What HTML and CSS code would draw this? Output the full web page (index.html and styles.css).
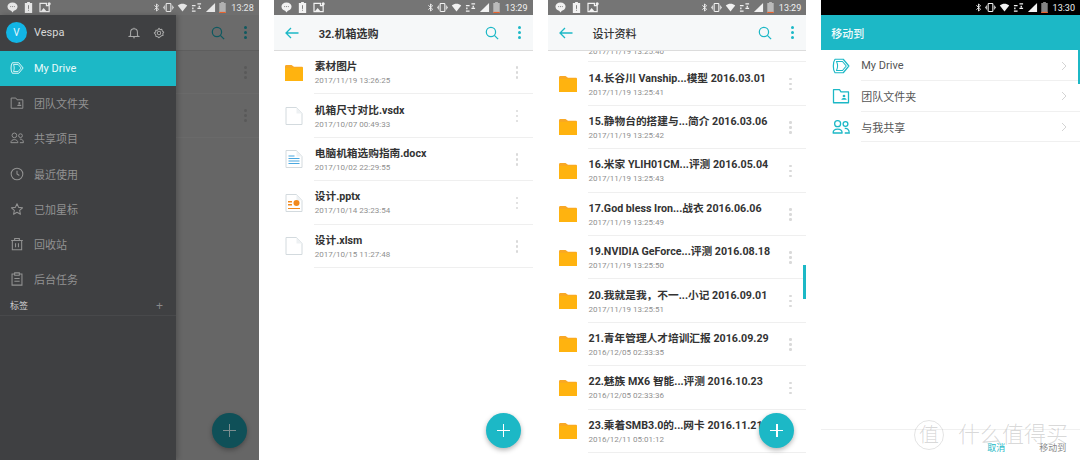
FILE: index.html
```html
<!DOCTYPE html>
<html lang="en">
<head>
  <meta charset="UTF-8">
  <title>Drive screens</title>
  <link rel="stylesheet" href="styles.css">
</head>
<body>
  <!-- shared icons -->
  <svg class="defs" width="0" height="0">
    <symbol id="i-bubble" viewBox="0 0 12 12"><path d="M6 .5c3.200 0 5.500 1.900 5.500 4.500S9.200 9.500 7.500 9.500L6 11.500 4.500 9.500C2.800 9.500.5 7.600.5 5S2.800.5 6 .5z" fill="currentColor"/><path d="M3.500 5h5" stroke="#777" stroke-dasharray="1 1" fill="none"/></symbol>
    <symbol id="i-batt" viewBox="0 0 12 12"><path d="M4.500 0h3v1H10v11H2V1h2.500z" fill="currentColor"/><path d="M6 3.500v4M6 8.500v1" stroke="#777"/></symbol>
    <symbol id="i-flag" viewBox="0 0 14 12"><path d="M1 1.500h7V4h3v6.500H1z" fill="none" stroke="currentColor" stroke-width="1.300"/><path d="M2 10l3-3.500L8 10z" fill="currentColor"/><circle cx="11" cy="2" r="1.700" fill="currentColor"/></symbol>
    <symbol id="i-bt" viewBox="0 0 10 12"><path d="M2 3l6 5.500L5 11V1l3 2.500L2 9" fill="none" stroke="currentColor" stroke-width="1.300"/></symbol>
    <symbol id="i-vib" viewBox="0 0 14 12"><rect x="4" y="1" width="6" height="10" rx="1" fill="none" stroke="currentColor" stroke-width="1.400"/><path d="M2 3.500v5M12 3.500v5M.5 5v2M13.500 5v2" stroke="currentColor"/></symbol>
    <symbol id="i-wifi" viewBox="0 0 14 12"><path d="M1 3.500C4.500.5 9.500.5 13 3.500L7 11z" fill="currentColor"/></symbol>
    <symbol id="i-data" viewBox="0 0 12 12"><path d="M1 4h4M7 2h4M1 10h4M7 7h4M2 6v2M9 4v2" stroke="currentColor" stroke-width="1.500" fill="none"/></symbol>
    <symbol id="i-signal" viewBox="0 0 10 12"><path d="M10 1v10H0z" fill="currentColor"/></symbol>
    <symbol id="i-cell" viewBox="0 0 7 12"><path d="M2 0h3v1h2v11H0V1h2z" fill="currentColor" opacity=".55"/><path d="M0 10.800h7V12H0z" fill="#e8622c"/></symbol>
    <symbol id="i-drive" viewBox="0 0 24 24"><path d="M4 3h11l7.500 9-7.500 9H4c-3-4-3-14 0-18z" fill="none" stroke="currentColor" stroke-width="1.600" stroke-linejoin="round"/><path d="M6 6h8l5 6-5 6H6c1.700-3.500 1.700-8.500 0-12z" fill="none" stroke="currentColor" stroke-width="1.400" stroke-linejoin="round"/></symbol>
    <symbol id="i-team" viewBox="0 0 24 24"><path d="M2 3.500h8l2 3h10V21H2z" fill="none" stroke="currentColor" stroke-width="1.700" stroke-linejoin="round"/><circle cx="16" cy="12" r="1.800" fill="currentColor"/><path d="M12.500 17c0-3 7-3 7 0z" fill="currentColor"/></symbol>
    <symbol id="i-people" viewBox="0 0 24 24"><circle cx="7.500" cy="7.500" r="4" fill="none" stroke="currentColor" stroke-width="1.700"/><path d="M1.500 20c0-7 12-7 12 0z" fill="none" stroke="currentColor" stroke-width="1.700" stroke-linejoin="round"/><circle cx="18" cy="8" r="3.200" fill="none" stroke="currentColor" stroke-width="1.700"/><path d="M17 14c3-.5 6 1 6 6h-6" fill="none" stroke="currentColor" stroke-width="1.700"/></symbol>
    <symbol id="i-clock" viewBox="0 0 24 24"><circle cx="12" cy="12" r="10" fill="none" stroke="currentColor" stroke-width="1.800"/><path d="M12 6.500V12l4 2.500" fill="none" stroke="currentColor" stroke-width="1.800"/></symbol>
    <symbol id="i-star" viewBox="0 0 24 24"><path d="M12 3l2.800 6.200 6.700.7-5 4.500 1.400 6.600L12 17.600 6.100 21l1.400-6.600-5-4.500 6.700-.7z" fill="none" stroke="currentColor" stroke-width="1.800" stroke-linejoin="round"/></symbol>
    <symbol id="i-trash" viewBox="0 0 24 24"><path d="M2 6h20M8 6V2.500h8V6M4 6v16h16V6M9.500 10.500v7M14.500 10.500v7" fill="none" stroke="currentColor" stroke-width="1.800"/></symbol>
    <symbol id="i-clip" viewBox="0 0 24 24"><path d="M8 3.500H3.500v19h17v-19H16M8 1.500h8v4H8zM7.500 11h9M7.500 16h9" fill="none" stroke="currentColor" stroke-width="1.800"/></symbol>
    <symbol id="i-bell" viewBox="0 0 14 14"><path d="M3 10V6a4 4 0 0 1 8 0v4l1.500 1h-11zM6 12.500h2M7 1v1" fill="none" stroke="currentColor" stroke-width="1.200"/></symbol>
    <symbol id="i-gear" viewBox="0 0 14 14"><circle cx="7" cy="7" r="2" fill="none" stroke="currentColor" stroke-width="1.200"/><path d="M7 1.500l1.300 1.600 2-.4.600 2 1.600 1.300-1.100 1.700.4 2-2 .6L7 12.500l-1.700-1.200-2-.4-.1-2L1.500 7l1.600-1.300.2-2 2 .1z" fill="none" stroke="currentColor" stroke-width="1.200" stroke-linejoin="round"/></symbol>
    <symbol id="i-search" viewBox="0 0 16 16"><circle cx="6.800" cy="6.800" r="5.300" fill="none" stroke="currentColor" stroke-width="1.400"/><path d="M10.700 10.700L15 15" stroke="currentColor" stroke-width="1.500"/></symbol>
    <symbol id="i-back" viewBox="0 0 14 12"><path d="M13.500 6H1M6 1L1 6l5 5" fill="none" stroke="currentColor" stroke-width="1.300"/></symbol>
    <symbol id="i-folder" viewBox="0 0 18 18"><path d="M0 2.500C0 1.500.5 1 1.500 1h5L9 2.700h7.500c1 0 1.500.4 1.500 1.300H0z" fill="#f9a825"/><path d="M0 3.800h18V17H0z" fill="#ffb30f"/></symbol>
    <symbol id="i-file" viewBox="0 0 18 18"><path d="M1 .5h10.500L17 6.500v11H1z" fill="#fff" stroke="#d3dade"/><path d="M11.500.5v6H17z" fill="#eef1f3"/></symbol>
    <symbol id="i-doc" viewBox="0 0 18 18"><path d="M1 .5h10.500L17 6.500v11H1z" fill="#fff" stroke="#d3dade"/><path d="M11.500.5v6H17z" fill="#eef1f3"/><path d="M3.500 8.500h11M3.500 11h11M3.500 13.500h11M3.500 6h6" stroke="#4aa8e0" stroke-width="1.100"/></symbol>
    <symbol id="i-ppt" viewBox="0 0 18 18"><path d="M1 .5h10.500L17 6.500v11H1z" fill="#fff" stroke="#d3dade"/><path d="M11.500.5v6H17z" fill="#eef1f3"/><circle cx="11.500" cy="9" r="3" fill="#f28a1e"/><path d="M3 7h4v1.500H3zM3 10h4v1.500H3z" fill="#f28a1e"/><path d="M3 14.500h12" stroke="#f28a1e"/></symbol>
    <symbol id="i-chev" viewBox="0 0 6 10"><path d="M1 1l4 4-4 4" fill="none" stroke="currentColor" stroke-width="1"/></symbol>
  </svg>

  <div class="screens">
    <!-- drawer screen -->
    <section class="phone">
      <div class="status dim">
        <div class="status-left">
          <svg class="st"><use href="#i-bubble"/></svg><svg class="st"><use href="#i-batt"/></svg><svg class="st wide"><use href="#i-flag"/></svg>
        </div>
        <div class="status-right">
          <svg class="st sm"><use href="#i-bt"/></svg><svg class="st"><use href="#i-vib"/></svg><svg class="st"><use href="#i-wifi"/></svg><svg class="st"><use href="#i-data"/></svg><svg class="st"><use href="#i-signal"/></svg><svg class="st sm"><use href="#i-cell"/></svg><span>13:28</span>
        </div>
      </div>
      <div class="drawer-wrap">
        <aside class="drawer">
          <div class="drawer-head">
            <span class="avatar">V</span>
            <span class="user">Vespa</span>
            <svg class="head-ic"><use href="#i-bell"/></svg>
            <svg class="head-ic"><use href="#i-gear"/></svg>
          </div>
          <nav class="nav">
            <div class="nav-row active"><svg class="nav-ic"><use href="#i-drive"/></svg>My Drive</div>
            <div class="nav-row"><svg class="nav-ic"><use href="#i-team"/></svg>团队文件夹</div>
            <div class="nav-row"><svg class="nav-ic"><use href="#i-people"/></svg>共享项目</div>
            <div class="nav-row"><svg class="nav-ic"><use href="#i-clock"/></svg>最近使用</div>
            <div class="nav-row"><svg class="nav-ic"><use href="#i-star"/></svg>已加星标</div>
            <div class="nav-row"><svg class="nav-ic"><use href="#i-trash"/></svg>回收站</div>
            <div class="nav-row"><svg class="nav-ic"><use href="#i-clip"/></svg>后台任务</div>
          </nav>
          <div class="tags"><span>标签</span><span class="tags-plus">+</span></div>
        </aside>
        <div class="scrim">
          <div class="scrim-bar">
            <svg class="bar-search"><use href="#i-search"/></svg>
            <span class="dots"><i></i><i></i><i></i></span>
          </div>
          <div class="scrim-row"><span class="dots"><i></i><i></i><i></i></span></div>
          <div class="scrim-row"><span class="dots"><i></i><i></i><i></i></span></div>
        </div>
      </div>
      <div class="fab fab-dim"></div>
    </section>

    <!-- folder screen -->
    <section class="phone">
      <div class="status">
        <div class="status-left">
          <svg class="st"><use href="#i-bubble"/></svg><svg class="st"><use href="#i-batt"/></svg><svg class="st wide"><use href="#i-flag"/></svg>
        </div>
        <div class="status-right">
          <svg class="st sm"><use href="#i-bt"/></svg><svg class="st"><use href="#i-vib"/></svg><svg class="st"><use href="#i-wifi"/></svg><svg class="st"><use href="#i-data"/></svg><svg class="st"><use href="#i-signal"/></svg><svg class="st sm"><use href="#i-cell"/></svg><span>13:29</span>
        </div>
      </div>
      <header class="appbar">
        <svg class="back"><use href="#i-back"/></svg>
        <span class="title">32.机箱选购</span>
        <svg class="bar-search"><use href="#i-search"/></svg>
        <span class="dots"><i></i><i></i><i></i></span>
      </header>
      <div class="list">
        <div class="row"><svg class="file-ic"><use href="#i-folder"/></svg><div class="row-text"><div class="name">素材图片</div><div class="date">2017/11/19 13:26:25</div></div><span class="dots"><i></i><i></i><i></i></span></div>
        <div class="row"><svg class="file-ic"><use href="#i-file"/></svg><div class="row-text"><div class="name">机箱尺寸对比.vsdx</div><div class="date">2017/10/07 00:49:33</div></div><span class="dots"><i></i><i></i><i></i></span></div>
        <div class="row"><svg class="file-ic"><use href="#i-doc"/></svg><div class="row-text"><div class="name">电脑机箱选购指南.docx</div><div class="date">2017/10/02 22:29:55</div></div><span class="dots"><i></i><i></i><i></i></span></div>
        <div class="row"><svg class="file-ic"><use href="#i-ppt"/></svg><div class="row-text"><div class="name">设计.pptx</div><div class="date">2017/10/14 23:23:54</div></div><span class="dots"><i></i><i></i><i></i></span></div>
        <div class="row"><svg class="file-ic"><use href="#i-file"/></svg><div class="row-text"><div class="name">设计.xlsm</div><div class="date">2017/10/15 11:27:48</div></div><span class="dots"><i></i><i></i><i></i></span></div>
      </div>
      <div class="fab"></div>
    </section>

    <!-- long list screen -->
    <section class="phone">
      <div class="status">
        <div class="status-left">
          <svg class="st"><use href="#i-bubble"/></svg><svg class="st"><use href="#i-batt"/></svg><svg class="st wide"><use href="#i-flag"/></svg>
        </div>
        <div class="status-right">
          <svg class="st sm"><use href="#i-bt"/></svg><svg class="st"><use href="#i-vib"/></svg><svg class="st"><use href="#i-wifi"/></svg><svg class="st"><use href="#i-data"/></svg><svg class="st"><use href="#i-signal"/></svg><svg class="st sm"><use href="#i-cell"/></svg><span>13:29</span>
        </div>
      </div>
      <header class="appbar">
        <svg class="back"><use href="#i-back"/></svg>
        <span class="title thin">设计资料</span>
        <svg class="bar-search"><use href="#i-search"/></svg>
        <span class="dots"><i></i><i></i><i></i></span>
      </header>
      <div class="list scrolled">
        <div class="row"><svg class="file-ic"><use href="#i-folder"/></svg><div class="row-text"><div class="date clipped">2017/11/19 13:25:40</div></div></div>
        <div class="row"><svg class="file-ic"><use href="#i-folder"/></svg><div class="row-text"><div class="name">14.长谷川 Vanship...模型 2016.03.01</div><div class="date">2017/11/19 13:25:41</div></div><span class="dots"><i></i><i></i><i></i></span></div>
        <div class="row"><svg class="file-ic"><use href="#i-folder"/></svg><div class="row-text"><div class="name">15.静物台的搭建与...简介 2016.03.06</div><div class="date">2017/11/19 13:25:42</div></div><span class="dots"><i></i><i></i><i></i></span></div>
        <div class="row"><svg class="file-ic"><use href="#i-folder"/></svg><div class="row-text"><div class="name">16.米家 YLIH01CM...评测 2016.05.04</div><div class="date">2017/11/19 13:25:43</div></div><span class="dots"><i></i><i></i><i></i></span></div>
        <div class="row"><svg class="file-ic"><use href="#i-folder"/></svg><div class="row-text"><div class="name">17.God bless Iron...战衣 2016.06.06</div><div class="date">2017/11/19 13:25:49</div></div><span class="dots"><i></i><i></i><i></i></span></div>
        <div class="row"><svg class="file-ic"><use href="#i-folder"/></svg><div class="row-text"><div class="name">19.NVIDIA GeForce...评测 2016.08.18</div><div class="date">2017/11/19 13:25:50</div></div><span class="dots"><i></i><i></i><i></i></span></div>
        <div class="row"><svg class="file-ic"><use href="#i-folder"/></svg><div class="row-text"><div class="name">20.我就是我，不一...小记 2016.09.01</div><div class="date">2017/11/19 13:25:51</div></div><span class="dots"><i></i><i></i><i></i></span></div>
        <div class="row"><svg class="file-ic"><use href="#i-folder"/></svg><div class="row-text"><div class="name">21.青年管理人才培训汇报 2016.09.29</div><div class="date">2016/12/05 02:33:35</div></div><span class="dots"><i></i><i></i><i></i></span></div>
        <div class="row"><svg class="file-ic"><use href="#i-folder"/></svg><div class="row-text"><div class="name">22.魅族 MX6 智能...评测 2016.10.23</div><div class="date">2016/12/05 02:33:36</div></div><span class="dots"><i></i><i></i><i></i></span></div>
        <div class="row"><svg class="file-ic"><use href="#i-folder"/></svg><div class="row-text"><div class="name">23.乘着SMB3.0的...网卡 2016.11.21</div><div class="date">2016/12/11 05:01:12</div></div></div>
      </div>
      <div class="scroll-thumb"></div>
      <div class="fab"></div>
    </section>

    <!-- move to screen -->
    <section class="phone">
      <div class="status black">
        <div class="status-left"></div>
        <div class="status-right">
          <svg class="st sm"><use href="#i-bt"/></svg><svg class="st"><use href="#i-vib"/></svg><svg class="st"><use href="#i-wifi"/></svg><svg class="st"><use href="#i-data"/></svg><svg class="st"><use href="#i-signal"/></svg><svg class="st sm"><use href="#i-cell"/></svg><span>13:30</span>
        </div>
      </div>
      <header class="move-bar">移动到</header>
      <div class="move-list">
        <div class="move-row"><svg class="move-ic"><use href="#i-drive"/></svg><span class="move-name">My Drive</span><svg class="chev"><use href="#i-chev"/></svg></div>
        <div class="move-row"><svg class="move-ic"><use href="#i-team"/></svg><span class="move-name">团队文件夹</span><svg class="chev"><use href="#i-chev"/></svg></div>
        <div class="move-row"><svg class="move-ic"><use href="#i-people"/></svg><span class="move-name">与我共享</span><svg class="chev"><use href="#i-chev"/></svg></div>
      </div>
      <div class="move-thumb"></div>
      <footer class="move-foot"><span class="cancel">取消</span><span class="confirm">移动到</span></footer>
      <div class="watermark"><span class="wm-badge">值</span><span>什么值得买</span></div>
    </section>
  </div>
</body>
</html>
```

FILE: styles.css
```css
* {
  box-sizing: border-box;
}
html, body {
  margin: 0;
  height: 460px;
  overflow: hidden;
  background-color: #fff;
}
body {
  font-family: Roboto, 'Noto Sans CJK SC', sans-serif;
  color: #333;
}
.defs {
  position: absolute;
}
.screens {
  display: flex;
  gap: 15px;
  height: 460px;
}
.phone {
  position: relative;
  width: 259px;
  height: 460px;
  overflow: hidden;
  display: flex;
  flex-direction: column;
  background-color: #fff;
}

/* status bar */
.status {
  flex: none;
  height: 15px;
  background-color: #757575;
  color: #f2f2f2;
  display: flex;
  justify-content: space-between;
  align-items: center;
  padding: 0 5px 0 7px;
  font-size: 9px;
}
.status.dim {
  background-color: #6f6f6f;
  color: #e6e6e6;
}
.status.black {
  background-color: #000;
}
.status-left, .status-right {
  display: flex;
  align-items: center;
  gap: 5px;
}
.status-right {
  gap: 3px;
}
.status-right span {
  margin-left: 2px;
}
.st {
  width: 11px;
  height: 11px;
}
.st.wide {
  width: 13px;
}
.st.sm {
  width: 7px;
}

/* drawer screen */
.drawer-wrap {
  flex: 1;
  display: flex;
}
.drawer {
  width: 176px;
  background-color: #3f4042;
  box-shadow: 2px 0 5px rgba(0, 0, 0, 0.2);
  position: relative;
}
.drawer-head {
  height: 35.500px;
  display: flex;
  align-items: center;
  padding: 0 11px 0 6px;
  color: #d8d8d8;
}
.avatar {
  width: 21px;
  height: 21px;
  border-radius: 50%;
  background-color: #12b5e5;
  color: #e4f7fd;
  font-size: 10px;
  display: flex;
  align-items: center;
  justify-content: center;
}
.user {
  margin-left: 7px;
  font-size: 11px;
  flex: 1;
}
.head-ic {
  width: 12px;
  height: 12px;
  margin-left: 13px;
  color: #a8a8a8;
}
.nav-row {
  height: 35.200px;
  display: flex;
  align-items: center;
  padding-left: 10px;
  font-size: 11px;
  color: #929292;
}
.nav-row.active {
  background-color: #1cb8c6;
  color: #e8fafb;
}
.nav-ic {
  width: 14px;
  height: 14px;
  margin-right: 10px;
}
.tags {
  display: flex;
  justify-content: space-between;
  align-items: center;
  height: 19px;
  padding: 0 13px 0 10px;
  font-size: 9px;
  color: #cfcfcf;
  border-bottom: 1px solid #48494b;
}
.tags-plus {
  font-family: 'Liberation Sans', sans-serif;
  font-size: 12px;
  color: #8a8a8a;
}
.scrim {
  flex: 1;
  background-color: #666;
}
.scrim-bar {
  height: 36px;
  display: flex;
  align-items: center;
  justify-content: flex-end;
  padding-right: 12px;
  background-color: #6b6b6b;
  border-bottom: 1px solid #5e5e5e;
}
.scrim-bar .bar-search {
  margin-right: 19px;
  color: #0f5960;
}
.scrim-bar .dots i {
  background-color: #0f5960;
}
.scrim-row {
  height: 43.400px;
  display: flex;
  align-items: center;
  justify-content: flex-end;
  padding-right: 12px;
  border-bottom: 1px solid #6a6a6a;
}
.scrim-row .dots i {
  background-color: #595959;
}

/* app bar */
.appbar {
  flex: none;
  position: relative;
  z-index: 2;
  height: 36px;
  background-color: #f6f8f9;
  border-bottom: 1px solid #dcdcdc;
  display: flex;
  align-items: center;
  padding: 0 12px 0 11px;
}
.back {
  width: 14px;
  height: 12px;
  color: #1cb8c6;
}
.title {
  flex: 1;
  margin-left: 20px;
  font-size: 11px;
  font-weight: 700;
  color: #333;
}
.title.thin {
  font-weight: 500;
}
.bar-search {
  width: 14px;
  height: 14px;
  color: #1cb8c6;
  margin-right: 19px;
}
.dots {
  display: flex;
  flex-direction: column;
  gap: 2px;
  width: 3px;
}
.dots i {
  display: block;
  width: 3px;
  height: 3px;
  border-radius: 50%;
  background-color: #1cb8c6;
}

/* file rows */
.list {
  flex: none;
}
.list.scrolled {
  margin-top: -32px;
}
.row {
  position: relative;
  height: 43.400px;
  display: flex;
  align-items: center;
  padding: 0 14px 0 11px;
}
.row::after {
  content: "";
  position: absolute;
  left: 40px;
  right: 0;
  bottom: 0;
  height: 1px;
  background-color: #efefef;
}
.file-ic {
  width: 18px;
  height: 18px;
  flex: none;
}
.row-text {
  flex: 1;
  margin-left: 12px;
  padding-top: 2px;
  min-width: 0;
}
.name {
  font-size: 10.700px;
  line-height: 14px;
  font-weight: 700;
  color: #333;
  white-space: nowrap;
}
.date {
  font-size: 8px;
  line-height: 12px;
  margin-top: 1px;
  color: #8f8f8f;
}
.date.clipped {
  margin-top: 21px;
}
.row .dots {
  gap: 2.500px;
}
.row .dots i {
  width: 2.500px;
  height: 2.500px;
  background-color: #d9d9d9;
}
.scroll-thumb {
  position: absolute;
  right: 0;
  top: 265px;
  width: 3px;
  height: 34px;
  background-color: #1cb8c6;
}

/* floating button */
.fab {
  position: absolute;
  right: 12px;
  top: 413px;
  width: 35px;
  height: 35px;
  border-radius: 50%;
  background-color: #1cb8c6;
  color: #fff;
  box-shadow: 0 2px 5px rgba(0, 0, 0, 0.3);
  z-index: 3;
}
.fab::before, .fab::after {
  content: "";
  position: absolute;
  background-color: currentColor;
}
.fab::before {
  left: 11px;
  right: 11px;
  top: 17px;
  height: 1.300px;
}
.fab::after {
  top: 11px;
  bottom: 11px;
  left: 17px;
  width: 1.300px;
}
.fab-dim {
  background-color: #0f5058;
  color: #7c8d8f;
}

/* move to screen */
.move-bar {
  flex: none;
  height: 35px;
  background-color: #1cb8c6;
  color: #f0fbfc;
  display: flex;
  align-items: center;
  padding-left: 10px;
  font-size: 11px;
  font-weight: 500;
}
.move-list {
  padding-top: 0.500px;
}
.move-row {
  position: relative;
  height: 30.500px;
  display: flex;
  align-items: center;
  padding: 0 13px 0 11px;
  font-size: 11px;
  color: #555;
}
.move-row::after {
  content: "";
  position: absolute;
  left: 40px;
  right: 0;
  bottom: 0;
  height: 1px;
  background-color: #f0f0f0;
}
.move-ic {
  width: 18px;
  height: 18px;
  color: #1cb8c6;
  margin-right: 11px;
}
.move-name {
  flex: 1;
}
.chev {
  width: 6px;
  height: 10px;
  color: #d4d4d4;
}
.move-thumb {
  position: absolute;
  right: 0;
  top: 50px;
  width: 2px;
  height: 34px;
  background-color: #1cb8c6;
}
.move-foot {
  position: absolute;
  left: 0;
  right: 0;
  top: 429px;
  height: 31px;
  padding: 4px 0 0 166px;
  border-top: 1px solid #f0f0f0;
  display: flex;
  align-items: center;
  gap: 34px;
  font-size: 9px;
}
.cancel {
  color: #1cb8c6;
}
.confirm {
  color: #8a8a8a;
}
.watermark {
  position: absolute;
  right: 12px;
  bottom: 10px;
  display: flex;
  align-items: center;
  gap: 14px;
  font-size: 22px;
  line-height: 30px;
  font-weight: 300;
  color: rgba(120, 120, 120, 0.28);
}
.wm-badge {
  width: 30px;
  height: 30px;
  border-radius: 50%;
  border: 1px solid rgba(120, 120, 120, 0.2);
  font-size: 20px;
  display: flex;
  align-items: center;
  justify-content: center;
}
```
